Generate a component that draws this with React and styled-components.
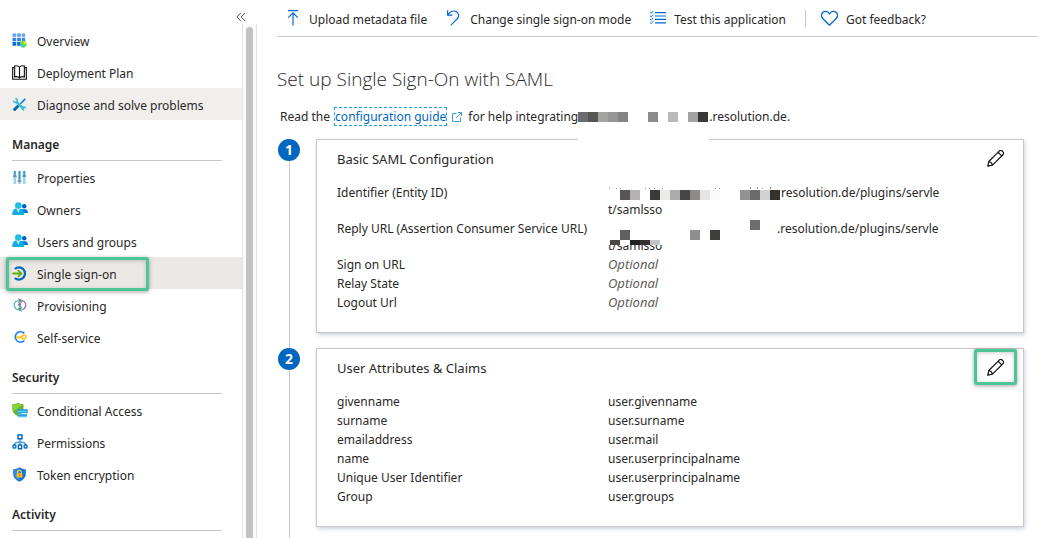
import React from 'react';
import styled, { createGlobalStyle } from 'styled-components';

const GlobalStyle = createGlobalStyle`
  * {
    box-sizing: border-box;
  }

  body {
    margin: 0;
    background: #fff;
    color: #292827;
    font-family: 'Noto Sans', 'Open Sans', sans-serif;
    font-size: 12px;
    line-height: 17px;
    overflow: hidden;
  }

  svg {
    display: block;
    flex: none;
  }

  button {
    padding: 0;
    border: 0;
    background: none;
    color: inherit;
    font: inherit;
    cursor: pointer;
  }
`;

const Page = styled.div`
  display: flex;
  height: 100vh;
  overflow: hidden;
`;

const Sidebar = styled.aside`
  display: flex;
  flex-direction: column;
  flex: none;
  width: 257px;
`;

const SidebarTop = styled.div`
  display: flex;
  flex: none;
  justify-content: flex-end;
  height: 24px;
  padding: 12px 11px 0 0;

  button {
    width: 10px;
    height: 10px;
  }
`;

const SidebarBody = styled.div`
  display: flex;
  flex: 1;
  min-height: 0;
`;

const Nav = styled.nav`
  flex: 1;
  min-width: 0;
  overflow: hidden;
`;

const NavHeading = styled.h2`
  height: 41px;
  margin: 0 20px 0 12px;
  padding-top: 16px;
  border-bottom: 1px solid #c8c6c4;
  font-size: 12px;
  line-height: 17px;
  font-weight: 600;
`;

const NavItem = styled.a`
  position: relative;
  display: flex;
  align-items: center;
  gap: 10px;
  height: 32px;
  padding: 2px 0 0 12px;
  background: ${({ $background }) => $background || 'transparent'};
  color: inherit;
  text-decoration: none;
`;

const Highlight = styled.span`
  position: absolute;
  border: 3px solid #4dc596;
  border-radius: 2px;
  box-shadow: 0 1px 4px rgba(0, 0, 0, 0.35), inset 0 1px 4px rgba(0, 0, 0, 0.2);
  pointer-events: none;
`;

const NavHighlight = styled(Highlight)`
  inset: 0 auto -2px 6px;
  width: 143px;
`;

const EditHighlight = styled(Highlight)`
  inset: 0;
`;

const ScrollTrack = styled.div`
  width: 15px;
  padding: 3px 3px 0;
  border: solid #e1e1e1;
  border-width: 0 1px;
  background: #fafafa;
`;

const ScrollThumb = styled.div`
  height: 100%;
  border-radius: 4px 4px 0 0;
  background: #c1c1c1;
`;

const Main = styled.main`
  flex: 1;
  min-width: 0;
  padding-left: 20px;
`;

const Toolbar = styled.div`
  display: flex;
  align-items: center;
  gap: 3px;
  height: 37px;
  border-bottom: 1px solid #c8c8c8;
  white-space: nowrap;
`;

const ToolbarButton = styled.button`
  display: flex;
  align-items: center;
  gap: 8px;
  height: 36px;
  padding: 2px 8px 0;

  svg {
    margin-bottom: 2px;
  }
`;

const Divider = styled.span`
  width: 1px;
  height: 17px;
  margin: 0 4px 0 8px;
  background: #c8c8c8;
`;

const Title = styled.h1`
  margin: 28px 0 0;
  font-family: 'Open Sans', sans-serif;
  font-size: 19px;
  line-height: 28px;
  font-weight: 300;
`;

const Intro = styled.p`
  display: flex;
  align-items: center;
  margin: 15px 0 14px 3px;
  white-space: pre;
`;

const GuideLink = styled.a`
  margin-left: 2px;
  outline: 1px dashed #1ba1e2;
  color: #0067c0;
  text-decoration: none;
`;

const ExternalIcon = styled.svg`
  margin: 0 6px;
`;

const Step = styled.section`
  display: flex;
  gap: 16px;
  margin: 0 14px 0 1px;
`;

const StepMarker = styled.div`
  display: flex;
  flex-direction: column;
  align-items: center;
  width: 22px;

  &::after {
    content: '';
    flex: 1;
    width: 1px;
    background: #c8c8c8;
  }
`;

const StepNumber = styled.span`
  width: 22px;
  height: 22px;
  border-radius: 50%;
  background: #0067c0;
  color: #fff;
  font-size: 14px;
  line-height: 21px;
  font-weight: 700;
  text-align: center;
`;

const Card = styled.div`
  flex: 1;
  min-width: 0;
  margin-bottom: 15px;
  padding: 0 6px 20px 20px;
  border: 1px solid #c8c8c8;
  box-shadow: 1px 2px 4px rgba(60, 80, 120, 0.25);
`;

const CardHeader = styled.header`
  display: flex;
  justify-content: space-between;
  align-items: center;
  height: 36px;
  margin-bottom: 7px;

  h2 {
    margin: 2px 0 0;
    font-size: 13px;
    font-weight: 400;
  }
`;

const EditButton = styled.button`
  position: relative;
  display: flex;
  justify-content: center;
  align-items: center;
  width: 43px;
  height: 36px;
`;

const Fields = styled.table`
  width: 100%;
  border-collapse: collapse;
  table-layout: fixed;

  th,
  td {
    padding: 1px 0;
    font-weight: 400;
    text-align: left;
    vertical-align: top;
    white-space: nowrap;
  }

  th {
    width: 271px;
  }
`;

const Optional = styled.em`
  display: block;
  color: #605e5c;
  font-size: 13px;
`;

const Line = styled.div`
  display: flex;
  height: 17px;
`;

const Mosaic = styled.svg`
  position: relative;
  z-index: 1;
  overflow: visible;
`;

// cells: [x, y, color, height]
function Redacted({
  width, height, cells, cover, children,
}) {
  return (
    <Mosaic width={width} height={height} aria-hidden="true" shapeRendering="crispEdges">
      {cover && <rect x={cover[0]} y={cover[1]} width={cover[2]} height={cover[3]} fill="#fff" />}
      {cells.map(([x, y, color, h = 10]) => (
        <rect key={`${x}-${y}`} x={x} y={y} width="10" height={h} fill={color} />
      ))}
      {children}
    </Mosaic>
  );
}

const hostCells = [
  [0, 0, '#6c6c6c'], [10, 0, '#555'], [20, 0, '#a3a3a2'], [30, 0, '#969696'], [40, 0, '#858384'],
  [70, 0, '#8c8c8b'], [90, 0, '#b9b9b8'], [110, 0, '#a3a3a2'], [120, 0, '#3a3938'],
];

const identifierCells = [
  [12, 6, '#575656'], [22, 6, '#b2b0b0'], [42, 6, '#3a3938'], [52, 6, '#eaeae9'],
  [62, 6, '#ababab'], [72, 6, '#464544'], [82, 6, '#8c8b8a'], [92, 6, '#e5e5e5'],
  [102, 6, '#fafafa'], [132, 6, '#929292'], [142, 6, '#6b6b6b'], [152, 6, '#d2d2d2'],
  [162, 6, '#333231'],
];

const replyCells = [
  [142, 0, '#6e6e6e'], [12, 10, '#5f5f5f'], [82, 10, '#8f8f8f'], [102, 10, '#3f3e3d'],
  [2, 20, '#484746', 5], [22, 20, '#222', 5], [32, 20, '#333231', 5], [42, 20, '#c4c4c4', 5],
];

function Icon({ size = 16, children }) {
  return (
    <svg width={size} height={size} viewBox="0 0 16 16" fill="none" aria-hidden="true">
      {children}
    </svg>
  );
}

const OverviewIcon = () => (
  <Icon size={15}>
    <path fill="#5ea0ef" d="M.5.5h4v3.6h-4zM5.5.5h4v3.6h-4zM10.5.5h3.5v3.6h-3.5z" />
    <path fill="#2f86e8" d="M.5 5h4v3.7h-4zM5.5 5h4v3.7h-4zM10.5 5h3.5v3.7h-3.5z" />
    <path fill="#0f6cda" d="M.5 9.7h4v3.8h-4zM5.5 9.7h4v3.8h-4z" />
    <circle cx="12" cy="11.8" r="3.6" fill="#7edb29" />
    <path fill="#32c8dc" d="M8.4 11.8a3.6 3.6 0 0 0 5.4 3.1c-.4-1.7-2-1.2-2.3-2.4-.3-1-1.7-.8-3.1-.7z" />
    <path fill="#d8ed3d" d="M11.8 9.5c1 .3.3 1.8 1.5 2.2s1.2-.7 2-.7c-.6-1.5-2-2.3-3.5-1.5z" />
  </Icon>
);

const BookIcon = () => (
  <Icon size={15}>
    <path
      stroke="#111"
      strokeWidth="1.2"
      d="M8 2.2C6.9.7 4.8.6 2.8 1v11.7c2-.5 4-.4 5.2 1.1 1.2-1.5 3.2-1.6 5.2-1.1V1C11.2.6 9.1.7 8 2.2zM8 2.2v12M2.6 2.8H.7v12.4h14.6V2.8h-1.9"
    />
  </Icon>
);

const ToolsIcon = () => (
  <Icon size={15}>
    <path stroke="#0078d4" strokeWidth="1.6" d="M14.2 2 9 7.3" />
    <path stroke="#0f6cae" strokeWidth="3.2" strokeLinecap="round" d="m6.2 9.9-3.3 3.3" />
    <path stroke="#32bedd" strokeWidth="2.6" d="M4 4.6 12.7 13" />
    <path fill="#32bedd" d="M1 3.3 3.3 5.2 5 3.7 3.2 1.3C5 .7 7 2.2 6.5 4.7L4.9 6.5C2.5 7.4.5 5.500 1 3.300zM10.200 11.800l1.900-1.800c1.900-.5 3.400.8 3.100 2.700l-1.700-1.500-1.400 1.500 1.500 1.800c-1.900.7-3.700-.8-3.400-2.700z" />
    <circle cx="2.8" cy="13.3" r="1.2" fill="#005ba1" />
  </Icon>
);

const PropertiesIcon = () => (
  <Icon size={15}>
    <path stroke="#9fd3ea" strokeWidth="3" d="M3 1v14M8 1v14M13 1v14" />
    <path stroke="#3999c6" strokeWidth="1.7" d="M3 1v5M8 1v10M13 1v5" />
    <path stroke="#6d7b84" strokeWidth="1.4" d="M1 6.600h4M6 11.800h4M11 6.600h4" />
  </Icon>
);

const PeopleIcon = () => (
  <Icon>
    <circle cx="12.2" cy="5.2" r="2.3" fill="#0062d1" />
    <path fill="#0078e5" d="M9.5 8.200h4c1.600 0 2.500 1.900 2.500 3.900H9.500z" />
    <circle cx="6.3" cy="4.5" r="3.3" fill="#21bde4" />
    <path fill="#10aee2" d="M.2 14C.2 10 2 7.600 4.300 7.600l2 2.200 2-2.200c2.400 0 3.700 3 3.700 6.400z" />
    <path fill="#b6edf7" d="m4.500 7.700 1.800 4.300 1.800-4.300c-1.200.6-2.400.6-3.600 0z" />
  </Icon>
);

const SignOnIcon = () => (
  <Icon size={15}>
    <path stroke="#0068c0" strokeWidth="2.4" d="M3 3.200a6.500 6.500 0 1 1 0 9.600" />
    <path stroke="#5fb300" strokeWidth="1.9" d="M.5 8h9.700M6.300 4.300 10.100 8l-3.800 3.700" />
  </Icon>
);

const ProvisioningIcon = () => (
  <Icon size={14}>
    <path stroke="#4ba6d8" strokeWidth="1.3" d="M6 3.200 3.500 3.600 1.500 6.500v3l2 3L6 13" />
    <path stroke="#8b5fbf" strokeWidth="1.3" d="m10 3 2.500.6 2 2.900v3l-2 3L10 13" />
    <path stroke="#8b5fbf" strokeWidth="1.2" d="m6 .8 4 2-4 2.200M5.800 7.400 10 5" />
    <path stroke="#3d9ed2" strokeWidth="1.2" d="m10 10.800-4 2.300 4 2M6 8.600l4 2" />
    <circle cx="8" cy="3.5" r="1.7" fill="#55a630" />
    <circle cx="8" cy="12.3" r="1.7" fill="#55a630" />
    <circle cx="8" cy="7.8" r="1.2" fill="#7961b8" />
  </Icon>
);

const SelfServiceIcon = () => (
  <Icon size={14}>
    <path stroke="#2683dc" strokeWidth="1.9" d="M13 3.900A6 6 0 1 0 13 12" />
    <circle cx="12.5" cy="8" r="2.2" stroke="#fcc419" strokeWidth="1.8" />
    <path stroke="#fcc419" strokeWidth="1.8" d="M10.300 8H4.800v2M7.500 8v1.700" />
  </Icon>
);

const ConditionalIcon = () => (
  <Icon>
    <path fill="#6bb42a" d="M6 .5C4 2 2.400 2.200.3 2.300V7c0 4 3.700 6.200 5.700 7.200 2.400-1.200 5.500-3.500 5.500-7.200V2.300C9.400 2.200 7.800 2 6 .5z" />
    <path fill="#86d633" d="M6 1.500C4.300 2.700 2.900 3 1.200 3.100V7c0 .8.200 1.500.5 2.200L10 2.900c-1.500-.2-2.700-.6-4-1.400z" />
    <path fill="#2493df" d="M5.200 7.200h10.600v4H5.200z" />
    <path fill="#50c8f4" d="M5.200 8.600h9.600v2H5.200zM5.800 11.700h9.200v3.500H5.800z" />
    <path stroke="#2493df" d="M5.800 13.300H15" />
  </Icon>
);

const PermissionsIcon = () => (
  <Icon>
    <path stroke="#4da0dc" strokeWidth="1.4" d="M8 4.500v6M2.200 11.500C2.500 8.500 4.500 8 8 8s5.500.5 5.800 3.500" />
    <path stroke="#0067c0" strokeWidth="1.4" d="M6 1h4v3.700H6zM6.400 11h3.200v3.800H6.400z" />
    <rect x=".9" y="11" width="3" height="3" rx="1" stroke="#0067c0" strokeWidth="1.3" />
    <rect x="12.1" y="11" width="3" height="3" rx="1" stroke="#0067c0" strokeWidth="1.3" />
  </Icon>
);

const TokenIcon = () => (
  <Icon size={15}>
    <path fill="#1473d2" d="M8 .2C5.800 1.900 3.700 2.300 1.300 2.300V7.500c0 4.400 4.200 7.100 6.700 8.300 2.500-1.200 6.700-3.900 6.700-8.300V2.300C12.300 2.300 10.200 1.900 8 .2z" />
    <path fill="#2e91ec" d="M8 1.500C6 2.800 4.300 3.200 2.300 3.300v4.200c0 3.600 3.400 5.900 5.700 7.100z" />
    <path stroke="#ffc83d" strokeWidth="1.3" d="M6 7V5.500C6 3 10 3 10 5.500V7" />
    <rect x="4.9" y="6.6" width="6.2" height="4.6" rx=".6" fill="#ffb91f" />
    <path stroke="#c87c00" d="M8 8v2" />
  </Icon>
);

const UploadIcon = () => (
  <Icon>
    <path stroke="#0067d0" strokeWidth="1.2" d="M3 .6h10M8 15.500V3M3.200 7.600 8 2.800l4.800 4.800" />
  </Icon>
);

const UndoIcon = () => (
  <Icon>
    <path stroke="#0067d0" strokeWidth="1.2" d="M1.600.3v4.800h4.800M1.800 5C4 1.300 7.500.2 10.300 1.600c2.800 1.600 3 5 .8 7.200L4.700 15.400" />
  </Icon>
);

const ListIcon = () => (
  <Icon>
    <path stroke="#0067d0" strokeWidth="1.2" d="M5 2.600h11M5 6h11M5 9.400h11M5 12.800h11" />
    <path
      stroke="#0067d0"
      strokeWidth=".9"
      d="m0 2.400 1.200 1L3.300 1M0 5.800l1.200 1 2.100-2.400M0 9.200l1.200 1 2.100-2.400M0 12.600l1.200 1 2.100-2.400"
    />
  </Icon>
);

const HeartIcon = () => (
  <Icon size={17}>
    <path
      stroke="#0067d0"
      strokeWidth="1.2"
      d="M8 14.300 1.700 8C-.9 5.200 1 1.300 4.300 1.300 6 1.300 7.200 2.100 8 3.500c.8-1.400 2-2.200 3.700-2.200 3.300 0 5.200 3.900 2.600 6.700z"
    />
  </Icon>
);

const PencilIcon = () => (
  <Icon size={17}>
    <path
      stroke="#111"
      strokeWidth="1.1"
      strokeLinejoin="round"
      d="m.7 15.300 1-4.500L11.500 1c1.900-1.800 5.300 1.300 3.500 3.500l-9.800 9.800zM1.700 10.800c1.700.3 3 1.700 3.500 3.500M10.400 2.100l3.500 3.500"
    />
    <path fill="#111" d="m.7 15.300.5-2 1.500 1.500z" />
  </Icon>
);

const mainLinks = [
  { label: 'Overview', icon: OverviewIcon },
  { label: 'Deployment Plan', icon: BookIcon },
  { label: 'Diagnose and solve problems', icon: ToolsIcon, background: '#f0efee' },
];

const navGroups = [
  {
    title: 'Manage',
    links: [
      { label: 'Properties', icon: PropertiesIcon },
      { label: 'Owners', icon: PeopleIcon },
      { label: 'Users and groups', icon: PeopleIcon },
      {
        label: 'Single sign-on', icon: SignOnIcon, background: '#ebe8e6', highlighted: true,
      },
      { label: 'Provisioning', icon: ProvisioningIcon },
      { label: 'Self-service', icon: SelfServiceIcon },
    ],
  },
  {
    title: 'Security',
    links: [
      { label: 'Conditional Access', icon: ConditionalIcon },
      { label: 'Permissions', icon: PermissionsIcon },
      { label: 'Token encryption', icon: TokenIcon },
    ],
  },
  { title: 'Activity', links: [] },
];

const claims = [
  ['givenname', 'user.givenname'],
  ['surname', 'user.surname'],
  ['emailaddress', 'user.mail'],
  ['name', 'user.userprincipalname'],
  ['Unique User Identifier', 'user.userprincipalname'],
  ['Group', 'user.groups'],
];

const IconSlot = styled.span`
  display: flex;
  justify-content: center;
  flex: none;
  width: 15px;
  margin-bottom: 2px;
`;

function NavLinks({ links }) {
  return links.map(({
    label, icon: LinkIcon, background, highlighted,
  }) => (
    <NavItem key={label} href="#" $background={background}>
      <IconSlot><LinkIcon /></IconSlot>
      {label}
      {highlighted && <NavHighlight />}
    </NavItem>
  ));
}

function StepCard({
  number, title, highlighted, children,
}) {
  return (
    <Step>
      <StepMarker><StepNumber>{number}</StepNumber></StepMarker>
      <Card>
        <CardHeader>
          <h2>{title}</h2>
          <EditButton type="button" aria-label={`Edit ${title}`}>
            <PencilIcon />
            {highlighted && <EditHighlight />}
          </EditButton>
        </CardHeader>
        <Fields>
          <tbody>{children}</tbody>
        </Fields>
      </Card>
    </Step>
  );
}

function App() {
  return (
    <Page>
      <GlobalStyle />
      <Sidebar>
        <SidebarTop>
          <button type="button" aria-label="Collapse menu">
            <svg width="10" height="10" viewBox="0 0 10 10" fill="none" stroke="#555">
              <path d="M5 .8.9 5 5 9.200M9.200.8 5.100 5l4.100 4.200" />
            </svg>
          </button>
        </SidebarTop>
        <SidebarBody>
          <Nav>
            <NavLinks links={mainLinks} />
            {navGroups.map((group) => (
              <React.Fragment key={group.title}>
                <NavHeading>{group.title}</NavHeading>
                <NavLinks links={group.links} />
              </React.Fragment>
            ))}
          </Nav>
          <ScrollTrack><ScrollThumb /></ScrollTrack>
        </SidebarBody>
      </Sidebar>
      <Main>
        <Toolbar>
          <ToolbarButton type="button">
            <UploadIcon />
            Upload metadata file
          </ToolbarButton>
          <ToolbarButton type="button">
            <UndoIcon />
            Change single sign-on mode
          </ToolbarButton>
          <ToolbarButton type="button">
            <ListIcon />
            Test this application
          </ToolbarButton>
          <Divider />
          <ToolbarButton type="button">
            <HeartIcon />
            Got feedback?
          </ToolbarButton>
        </Toolbar>
        <Title>Set up Single Sign-On with SAML</Title>
        <Intro>
          {'Read the '}
          <GuideLink href="#">configuration guide</GuideLink>
          <ExternalIcon width="10" height="10" viewBox="0 0 10 10" fill="none" stroke="#3aa0d8">
            <path d="M4.500 1.500h-4v8h8v-4M6 .5h3.500V4M9.500.5 4 6" />
          </ExternalIcon>
          for help integrating
          <Redacted width="131" height="10" cells={hostCells} cover={[0, 10, 131, 30]} />
          .resolution.de.
        </Intro>
        <StepCard number={1} title="Basic SAML Configuration">
          <tr>
            <th scope="row">Identifier (Entity ID)</th>
            <td>
              <Line>
                <Redacted width="173" height="17" cells={identifierCells}>
                  <path
                    fill="#999"
                    d="M1 4h1v1H1zM8 4h1v1H8zM12 4h1v1h-1zM37 4h1v1h-1zM41 4h1v1h-1zM46 4h1v1h-1zM54 4h1v1h-1zM107 4h1v1h-1zM111 4h1v1h-1zM142 3h1v2h-1zM149 3h1v2h-1zM154 4h1v1h-1zM162 3h1v2h-1z"
                  />
                </Redacted>
                resolution.de/plugins/servle
              </Line>
              <Line>t/samlsso</Line>
            </td>
          </tr>
          <tr>
            <th scope="row">Reply URL (Assertion Consumer Service URL)</th>
            <td>
              <Line>
                <Redacted width="169" height="17" cells={replyCells} cover={[0, 0, 169, 25]} />
                .resolution.de/plugins/servle
              </Line>
              <Line>t/samlsso</Line>
            </td>
          </tr>
          {['Sign on URL', 'Relay State', 'Logout Url'].map((label) => (
            <tr key={label}>
              <th scope="row">{label}</th>
              <td><Optional>Optional</Optional></td>
            </tr>
          ))}
        </StepCard>
        <StepCard number={2} title="User Attributes &amp; Claims" highlighted>
          {claims.map(([claim, value]) => (
            <tr key={claim}>
              <th scope="row">{claim}</th>
              <td>{value}</td>
            </tr>
          ))}
        </StepCard>
      </Main>
    </Page>
  );
}

export default App;
